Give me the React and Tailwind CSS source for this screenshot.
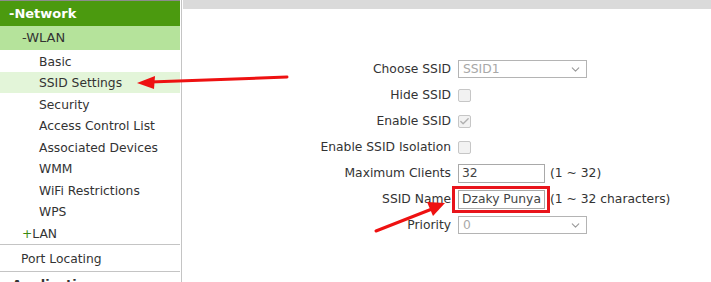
import { ChevronDown, Check } from 'lucide-react';

const subItems = ['Basic', 'SSID Settings', 'Security', 'Access Control List', 'Associated Devices', 'WMM', 'WiFi Restrictions', 'WPS'];

const Select = ({ value }) => (
  <div className="w-[129px] h-[18px] border border-[#b4b4b4] bg-white flex items-center justify-between px-[4px] text-[#a8a8a8]">
    <span>{value}</span>
    <ChevronDown size={13} strokeWidth={2} className="text-[#9a9a9a]" />
  </div>
);

const Checkbox = ({ checked }) => (
  <div className="w-[13px] h-[13px] rounded-[2px] border border-[#c6c6c6] bg-[#f2f2f2] flex items-center justify-center">
    {checked && <Check size={11} strokeWidth={3} className="text-[#b0b0b0]" />}
  </div>
);

const TextBox = ({ value }) => (
  <div className="w-[87px] h-[19px] border border-[#a9a9a9] bg-white flex items-center px-[3px] text-[#444]">{value}</div>
);

const Row = ({ label, children }) => (
  <div className="flex items-center h-[26px]">
    <div className="w-[268px] text-right text-[#333]">{label}</div>
    <div className="ml-[7px] flex items-center">{children}</div>
  </div>
);

export default function App() {
  return (
    <div className="relative w-[711px] h-[282px] overflow-hidden bg-white flex" style={{ fontFamily: '"DejaVu Sans", Verdana, sans-serif' }}>
      {/* sidebar */}
      <div className="w-[180px] shrink-0 text-[12.3px] text-[#333]">
        <div className="h-[26px] bg-[#4b9a0f] border-t border-[#8c8c8c] flex items-center pl-[9px] text-white font-bold text-[13px]">-Network</div>
        <div className="h-[24px] bg-[#b5e39b] flex items-center pl-[22px] text-[13px]">-WLAN</div>
        {subItems.map((item) => (
          <div key={item} className={`h-[21.5px] flex items-center pl-[39px] pt-[2px] ${item === 'SSID Settings' ? 'bg-[#e3f5d9]' : ''}`}>{item}</div>
        ))}
        <div className="h-[22px] flex items-center pl-[22px] pt-[2px]"><span className="text-[#3a8a10]">+</span>LAN</div>
        <div className="h-[28px] border-t border-b border-[#c4c4c4] flex items-center pl-[21px] pt-[2px]">Port Locating</div>
        <div className="h-[20px] flex items-start pl-[12px] pt-[3px] font-bold text-[13px]">Applications</div>
      </div>
      {/* main */}
      <div className="ml-[1px] border-l border-[#c4c4c4] flex-1 pl-[1px]">
        <div className="h-[9px] bg-[#dadada]" />
        <div className="pt-[47px] text-[12.3px]">
          <Row label="Choose SSID"><Select value="SSID1" /></Row>
          <Row label="Hide SSID"><Checkbox /></Row>
          <Row label="Enable SSID"><Checkbox checked /></Row>
          <Row label="Enable SSID Isolation"><Checkbox /></Row>
          <Row label="Maximum Clients">
            <TextBox value="32" />
            <span className="ml-[5px] text-[#333]">(1 ~ 32)</span>
          </Row>
          <Row label="SSID Name">
            <div className="relative">
              <TextBox value="Dzaky Punya" />
              <div className="absolute -left-[6px] -top-[4px] w-[98px] h-[27px] border-[3px] border-[#e8141b]" />
            </div>
            <span className="ml-[5px] text-[#333]">(1 ~ 32 characters)</span>
          </Row>
          <Row label="Priority"><Select value="0" /></Row>
        </div>
      </div>
      {/* annotation arrows */}
      <svg className="absolute inset-0 pointer-events-none" width="711" height="282">
        <line x1="287" y1="77" x2="150" y2="82" stroke="#ee1111" strokeWidth="3" strokeLinecap="round" />
        <polygon points="137,83 155,76 154,89" fill="#ee1111" />
        <line x1="376" y1="231" x2="432" y2="209" stroke="#ee1111" strokeWidth="3" strokeLinecap="round" />
        <polygon points="445,203 427,202 433,216" fill="#ee1111" />
      </svg>
    </div>
  );
}
